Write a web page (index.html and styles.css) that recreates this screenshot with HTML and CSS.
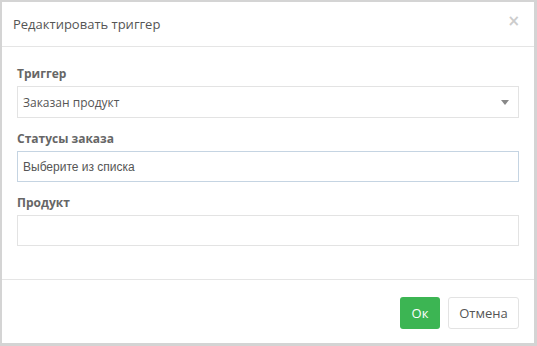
FILE: index.html
```html
<!DOCTYPE html>
<html lang="ru">
<head>
    <meta charset="UTF-8">
    <title>Редактировать триггер</title>
    <link rel="stylesheet" href="styles.css">
</head>
<body>
    <div class="modal">
        <div class="modal-header">
            <h4 class="modal-title">Редактировать триггер</h4>
            <span class="close">&times;</span>
        </div>
        <div class="modal-body">
            <div class="form-group">
                <label>Триггер</label>
                <div class="select">
                    <span>Заказан продукт</span>
                    <span class="caret"></span>
                </div>
            </div>
            <div class="form-group">
                <label>Статусы заказа</label>
                <input class="form-control focused" type="text" placeholder="Выберите из списка">
            </div>
            <div class="form-group">
                <label>Продукт</label>
                <input class="form-control" type="text">
            </div>
        </div>
        <div class="modal-footer">
            <button class="btn btn-ok">Ок</button>
            <button class="btn btn-cancel">Отмена</button>
        </div>
    </div>
</body>
</html>
```

FILE: styles.css
```css
html, body {
    margin: 0;
    height: 100%;
}
body {
    background-color: #d4d4d4;
    font-family: 'Open Sans', sans-serif;
    color: #555;
    padding: 2px 3px 3px 2px;
    box-sizing: border-box;
}
.modal {
    background-color: #fff;
    height: 100%;
    display: flex;
    flex-direction: column;
}
.modal-header {
    display: flex;
    align-items: center;
    justify-content: space-between;
    height: 44px;
    padding: 0 14px 0 11px;
    border-bottom: 1px solid #e5e5e5;
}
.modal-title {
    margin: 0;
    font-size: 13px;
    font-weight: normal;
    color: #555;
}
.close {
    font-size: 15px;
    font-weight: bold;
    color: #ccc;
    font-family: 'DejaVu Sans', sans-serif;
    line-height: 1;
    margin-top: -5px;
}
.modal-body {
    padding: 19px 15px 17px;
    flex: 1;
}
.form-group {
    margin-bottom: 13px;
}
.form-group:last-child {
    margin-bottom: 0;
}
.form-group:nth-child(2) + .form-group {
    margin-top: 1px;
}
label {
    display: block;
    font-size: 12px;
    font-weight: bold;
    line-height: 16px;
    margin-bottom: 4px;
    color: #666;
}
.select, .form-control {
    box-sizing: border-box;
    width: 100%;
    height: 31px;
    border: 1px solid #e3e3e3;
    background: #fff;
    padding: 0 5px;
    font-size: 12px;
    color: #555;
}
.select {
    height: 32px;
    display: flex;
    align-items: center;
    justify-content: space-between;
    padding-right: 9px;
}
.caret {
    width: 0;
    height: 0;
    border-left: 4px solid transparent;
    border-right: 4px solid transparent;
    border-top: 5px solid #888;
}
.form-control {
    display: block;
    font-family: 'Liberation Sans', Arial, sans-serif;
    outline: none;
}
.form-control.focused {
    border-color: #c5d4e2;
}
.form-control::placeholder {
    color: #555;
}
.modal-footer {
    display: flex;
    justify-content: flex-end;
    gap: 8px;
    height: 64px;
    padding: 17px 15px 0;
    box-sizing: border-box;
    border-top: 1px solid #e5e5e5;
}
.btn {
    height: 32px;
    border-radius: 3px;
    font-family: 'Open Sans', sans-serif;
    font-size: 13px;
    cursor: pointer;
}
.btn-ok {
    width: 40px;
    background-color: #3cb553;
    border: none;
    color: #fff;
}
.btn-cancel {
    width: 71px;
    background-color: #fff;
    border: 1px solid #e3e3e3;
    color: #555;
}
```
